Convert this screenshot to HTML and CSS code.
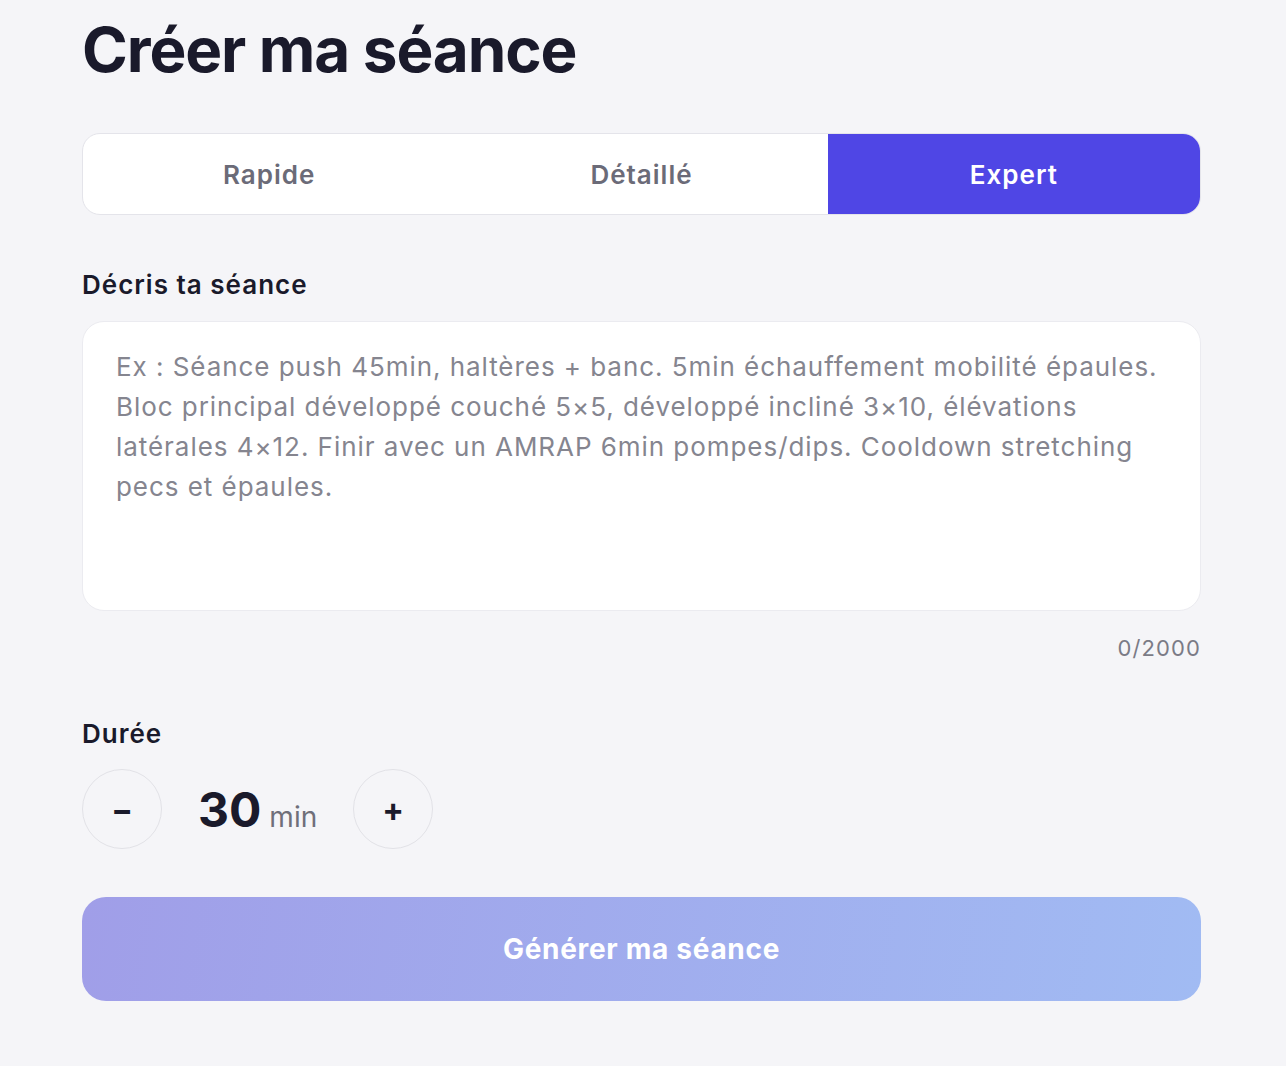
FILE: index.html
```html
<!DOCTYPE html>
<html lang="fr">
<head>
    <meta charset="UTF-8">
    <meta name="viewport" content="width=device-width, initial-scale=1.0">
    <title>Créer ma séance</title>
    <link rel="stylesheet" href="styles.css">
</head>
<body>
    <main class="page">
        <h1>Créer ma séance</h1>

        <div class="tabs">
            <button class="tab">Rapide</button>
            <button class="tab">Détaillé</button>
            <button class="tab active">Expert</button>
        </div>

        <label class="field-label" for="desc">Décris ta séance</label>
        <textarea id="desc" placeholder="Ex : Séance push 45min, haltères + banc. 5min échauffement mobilité épaules. Bloc principal développé couché 5×5, développé incliné 3×10, élévations latérales 4×12. Finir avec un AMRAP 6min pompes/dips. Cooldown stretching pecs et épaules."></textarea>
        <div class="counter">0/2000</div>

        <div class="field-label duration-label">Durée</div>
        <div class="stepper">
            <button class="step-btn">&minus;</button>
            <div class="value"><span class="num">30</span> <span class="unit">min</span></div>
            <button class="step-btn">+</button>
        </div>

        <button class="generate" disabled>Générer ma séance</button>
    </main>
</body>
</html>
```

FILE: styles.css
```css
body {
    margin: 0;
    background: #f5f5f8;
    font-family: Inter, "Noto Sans", sans-serif;
    color: #1a1a2b;
    letter-spacing: 0.9px;
}
.page {
    padding: 0 85px 40px 82px;
}
h1 {
    margin: 0;
    padding-top: 14px;
    font-size: 62px;
    line-height: 72px;
    font-weight: 700;
    letter-spacing: -1.1px;
    color: #1a1a2b;
}
.tabs {
    display: grid;
    grid-template-columns: 1fr 1fr 1fr;
    margin-top: 47px;
    background: #fff;
    border: 1px solid #e4e4ea;
    border-radius: 18px;
    overflow: hidden;
}
.tab {
    height: 80px;
    border: none;
    background: transparent;
    font-family: inherit;
    font-size: 26px;
    font-weight: 600;
    letter-spacing: 1px;
    color: #6b6b78;
}
.tab.active {
    background: #4f46e5;
    color: #fff;
}
.field-label {
    display: block;
    margin-top: 52px;
    font-size: 26px;
    font-weight: 600;
    line-height: 36px;
    letter-spacing: 1px;
    color: #1a1a2b;
}
textarea {
    display: block;
    width: 100%;
    box-sizing: border-box;
    height: 290px;
    margin-top: 18px;
    padding: 25px 33px;
    border: 1px solid #ebebf0;
    border-radius: 22px;
    background: #fff;
    font-family: inherit;
    font-size: 26px;
    line-height: 40px;
    letter-spacing: 0.95px;
    resize: none;
    outline: none;
}
textarea::placeholder {
    color: #85858f;
}
.counter {
    margin-top: 22px;
    text-align: right;
    font-size: 22px;
    line-height: 30px;
    letter-spacing: 1.1px;
    color: #7b7b86;
}
.duration-label {
    margin-top: 53px;
}
.stepper {
    display: flex;
    align-items: center;
    gap: 36px;
    margin-top: 17px;
}
.step-btn {
    width: 80px;
    height: 80px;
    border-radius: 50%;
    border: 1.5px solid #e2e2e7;
    background: transparent;
    font-family: inherit;
    font-size: 32px;
    font-weight: 700;
    color: #1a1a2b;
    display: flex;
    align-items: center;
    justify-content: center;
    padding: 0;
}
.value {
    display: flex;
    align-items: baseline;
    gap: 8px;
    letter-spacing: 0;
}
.num {
    font-size: 48px;
    font-weight: 700;
    color: #1a1a2b;
}
.unit {
    font-size: 28px;
    color: #6f6f7a;
}
.generate {
    display: block;
    width: 100%;
    height: 104px;
    margin-top: 48px;
    border: none;
    border-radius: 24px;
    background: linear-gradient(100deg, #a09ee8, #a1bbf3);
    color: #fff;
    font-family: inherit;
    font-size: 28px;
    font-weight: 700;
    letter-spacing: 0.7px;
}
```
